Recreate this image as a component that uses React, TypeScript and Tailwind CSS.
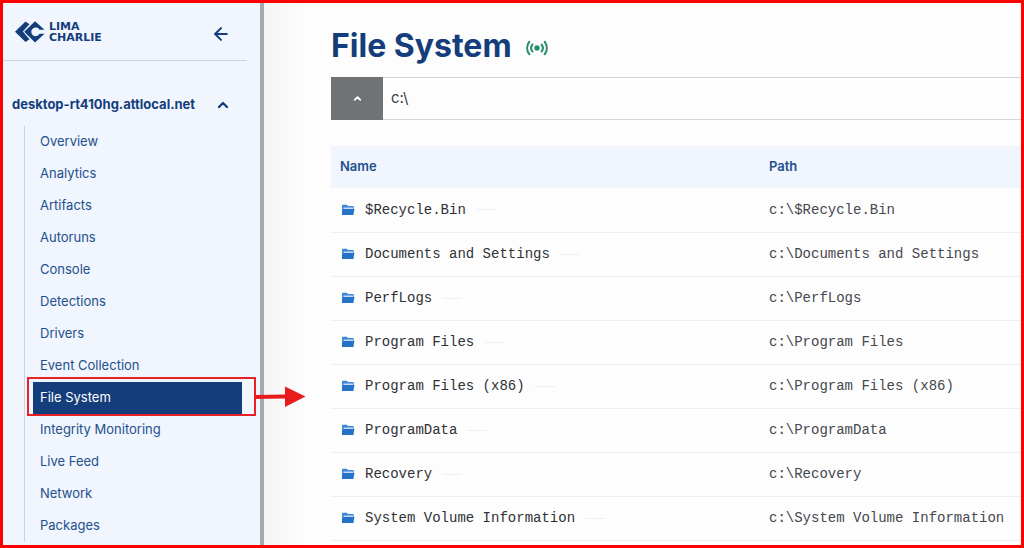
import { ArrowLeft, ChevronUp } from "lucide-react";

interface FolderEntry {
  name: string;
  path: string;
}

const navItems = [
  "Overview",
  "Analytics",
  "Artifacts",
  "Autoruns",
  "Console",
  "Detections",
  "Drivers",
  "Event Collection",
  "File System",
  "Integrity Monitoring",
  "Live Feed",
  "Network",
  "Packages",
];

const folders: FolderEntry[] = [
  "$Recycle.Bin",
  "Documents and Settings",
  "PerfLogs",
  "Program Files",
  "Program Files (x86)",
  "ProgramData",
  "Recovery",
  "System Volume Information",
].map((name) => ({ name, path: `c:\\${name}` }));

function LogoMark() {
  return (
    <svg viewBox="0 0 30 22" className="w-[30px] h-[22px]" fill="#143e7b">
      <path d="M10.5 0.5 L14.5 3.2 L7.8 10.6 L14.5 18.2 L10.5 21 L0 10.8 Z" />
      <path d="M20 0.2 L29.5 8.8 L24.6 8.8 A4.4 4.4 0 1 0 24.6 12.8 L29.5 12.8 L20 21.5 L9.2 10.8 Z" />
    </svg>
  );
}

function LiveIcon() {
  return (
    <svg
      viewBox="0 0 22 16"
      className="w-[22px] h-4"
      fill="none"
      stroke="#25906a"
      strokeWidth="2.1"
      strokeLinecap="round"
    >
      <circle cx="11" cy="8" r="2.7" fill="#25906a" stroke="none" />
      <path d="M6.4 4.6a5.5 5.5 0 0 0 0 6.8M15.6 4.6a5.5 5.5 0 0 1 0 6.8" />
      <path d="M3.2 1.8a10.5 10.5 0 0 0 0 12.4M18.8 1.8a10.5 10.5 0 0 1 0 12.4" />
    </svg>
  );
}

function FolderIcon() {
  return (
    <svg viewBox="0 0 14 12" className="w-[14px] h-3 shrink-0">
      <path
        d="M2 0.8h3.7l1.3 1.2h4.8a1 1 0 0 1 1 1V5H3.1L1.5 9.5H1V1.8a1 1 0 0 1 1-1Z"
        fill="#3a86d2"
      />
      <path d="M2.5 4.2h9.6" stroke="#e6f0fb" strokeWidth="1.2" />
      <path d="M2.8 5h10.6L12.4 11H1V6.8Z" fill="#2473c6" />
    </svg>
  );
}

function Sidebar() {
  return (
    <aside className="w-[261px] shrink-0 bg-[#f0f5fe] border-r-4 border-[#a5a9b3] text-[#24508c]">
      <div className="mr-[13px] h-[58px] pl-3 pr-4 flex items-center justify-between border-b border-[#cdd3de]">
        <a href="#home" className="flex items-center gap-1">
          <LogoMark />
          <span className="flex flex-col font-['DejaVu_Sans',sans-serif] font-bold text-[11px] leading-[11px] text-[#143e7b]">
            <span>LIMA</span>
            <span>CHARLIE</span>
          </span>
        </a>
        <button aria-label="Collapse menu" className="pt-1 text-[#143e7b]">
          <ArrowLeft size={20} strokeWidth={2.4} />
        </button>
      </div>

      <button className="mt-[34px] ml-[9px] w-[219px] h-5 flex items-center justify-between font-bold text-[13px] text-[#143e7b]">
        desktop-rt410hg.attlocal.net
        <ChevronUp size={16} strokeWidth={3.5} />
      </button>

      <nav className="mt-[11px] ml-[21px] mr-[18px] border-l border-[#ccd3df]">
        <ul className="pl-2">
          {navItems.map((item) => {
            const active = item === "File System";
            return (
              <li key={item} className="relative">
                <a
                  href={`#${item}`}
                  className={`h-8 pl-[7px] flex items-center text-[13px] ${
                    active ? "bg-[#143e7b] text-white" : ""
                  }`}
                >
                  {item}
                </a>
                {active && <Callout />}
              </li>
            );
          })}
        </ul>
      </nav>
    </aside>
  );
}

/* Red box around the active item with an arrow to the content */
function Callout() {
  return (
    <div className="absolute z-10 -left-[6px] -right-[14px] -top-[5px] -bottom-[2px] border-2 border-[#e82127] pointer-events-none">
      <svg
        viewBox="0 0 52 22"
        className="absolute left-full top-[7px] w-[52px] h-[22px]"
        fill="#e81c1c"
      >
        <path d="M0 9 L31 8.5 V0.5 L51.5 10.5 L31 21 V12.5 L0 13 Z" />
      </svg>
    </div>
  );
}

export default function App() {
  return (
    <div className="min-h-screen flex border-[3px] border-[#ff0000] bg-[#fdfdfd] font-['Inter',sans-serif]">
      <Sidebar />

      <main className="flex-1 min-w-0 pl-[67px] pt-[25px] bg-linear-to-r from-[#f5f5f5] to-[#fdfdfd] to-[40px]">
        <div className="flex items-center gap-[14px]">
          <h1 className="font-bold text-[32px] leading-9 text-[#143e7b]">
            File System
          </h1>
          <div className="pt-1">
            <LiveIcon />
          </div>
        </div>

        <form className="mt-[13px] h-[43px] flex border-y border-[#d3d5da]">
          <button
            type="button"
            aria-label="Parent folder"
            className="w-[52px] -my-px bg-[#707375] text-white flex items-center justify-center"
          >
            <ChevronUp size={11} strokeWidth={4} />
          </button>
          <input
            aria-label="Path"
            defaultValue="c:\"
            className="flex-1 min-w-0 px-2 text-[15px] text-[#3c3f45] outline-none"
          />
        </form>

        <table className="mt-[26px] w-full table-fixed text-left">
          <thead>
            <tr className="h-[42px] bg-[#f0f5fe] text-[13px] text-[#24508c]">
              <th className="pl-[9px] w-[428px] font-semibold">Name</th>
              <th className="pl-[10px] font-semibold">Path</th>
            </tr>
          </thead>
          <tbody className="font-['Liberation_Mono',monospace] text-sm text-[#2f3136]">
            {folders.map((folder) => (
              <tr key={folder.name} className="h-11 border-b border-[#eceff3]">
                <td className="pl-[10px]">
                  <div className="flex items-center gap-[10px]">
                    <FolderIcon />
                    <span>{folder.name}</span>
                    <span className="w-5 border-t border-[#eceff3]" />
                  </div>
                </td>
                <td className="pl-[10px] whitespace-nowrap text-[#45484e]">
                  {folder.path}
                </td>
              </tr>
            ))}
          </tbody>
        </table>
      </main>
    </div>
  );
}
